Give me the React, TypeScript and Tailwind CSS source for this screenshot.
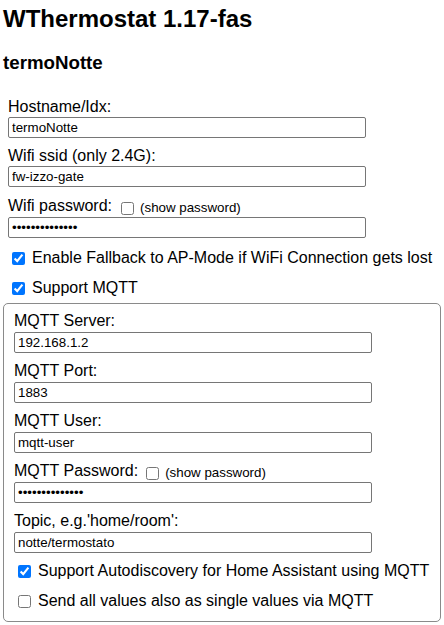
import React from "react";

const inputCls =
  "block w-[358px] h-[21px] border border-[#767676] rounded-[2px] px-[3px] text-[13.33px] text-black bg-white outline-none font-['Liberation_Sans',Arial,sans-serif]";

function Field({ label, value, type = "text", first = false, mt = "mt-[9px]" }: { label: string; value: string; type?: string; first?: boolean; mt?: string }) {
  return (
    <div className={first ? "" : mt}>
      <div className="h-[18px] leading-[18px]">{label}</div>
      <input type={type} defaultValue={value} className={inputCls + " mt-[2px]"} />
    </div>
  );
}

function PasswordField({ label, mt, gap }: { label: string; mt: string; gap: string }) {
  return (
    <div className={mt}>
      <div className="flex items-start h-[20px]">
        <span className="leading-[18px]">{label}</span>
        <input type="checkbox" className={"m-0 w-[13px] h-[13px] mt-[5px] " + gap} />
        <span className="ml-[6px] mt-[3px] text-[13.33px] leading-[15px]">(show password)</span>
      </div>
      <input type="password" defaultValue="ABCDEFGHIJKLMN" className={inputCls} />
    </div>
  );
}

function Check({ label, checked, mt }: { label: string; checked: boolean; mt: string }) {
  return (
    <div className={"flex items-start h-[18px] " + mt}>
      <input type="checkbox" defaultChecked={checked} className="m-0 w-[13px] h-[13px] mt-[3px] ml-[4px] mr-[7px]" />
      <span className="leading-[18px] whitespace-nowrap">{label}</span>
    </div>
  );
}

export default function App() {
  return (
    <div className="w-[444px] h-[625px] bg-white text-black px-[3px] font-['Liberation_Sans',Arial,sans-serif] text-[16px] overflow-hidden">
      <h1 className="mt-[5px] h-[28px] leading-[28px] text-[24px] font-bold whitespace-nowrap">WThermostat 1.17-fas</h1>
      <h3 className="mt-[19px] h-[22px] leading-[22px] text-[18.72px] font-bold">termoNotte</h3>

      <div className="pl-[5px]">
        <div className="mt-[24px]">
          <div className="h-[18px] leading-[18px]">Hostname/Idx:</div>
          <input defaultValue="termoNotte" className={inputCls + " mt-[1px]"} />
        </div>
        <div className="mt-[9px]">
          <div className="h-[18px] leading-[18px]">Wifi ssid (only 2.4G):</div>
          <input defaultValue="fw-izzo-gate" className={inputCls + " mt-[1px]"} />
        </div>
        <PasswordField label="Wifi password:" mt="mt-[10px]" gap="ml-[9px]" />
        <Check label="Enable Fallback to AP-Mode if WiFi Connection gets lost" checked mt="mt-[11px]" />
        <Check label="Support MQTT" checked mt="mt-[12px]" />
      </div>

      <fieldset className="mt-[6px] w-[438px] border border-[#8a8a8a] rounded-[5px] pt-[8px] pb-[11px] pl-[10px]">
        <Field label="MQTT Server:" value="192.168.1.2" first />
        <Field label="MQTT Port:" value="1883" />
        <Field label="MQTT User:" value="mqtt-user" />
        <PasswordField label="MQTT Password:" mt="mt-[9px]" gap="ml-[8px]" />
        <Field label="Topic, e.g.'home/room':" value="notte/termostato" />
        <Check label="Support Autodiscovery for Home Assistant using MQTT" checked mt="mt-[9px]" />
        <Check label="Send all values also as single values via MQTT" checked={false} mt="mt-[12px]" />
      </fieldset>
    </div>
  );
}
